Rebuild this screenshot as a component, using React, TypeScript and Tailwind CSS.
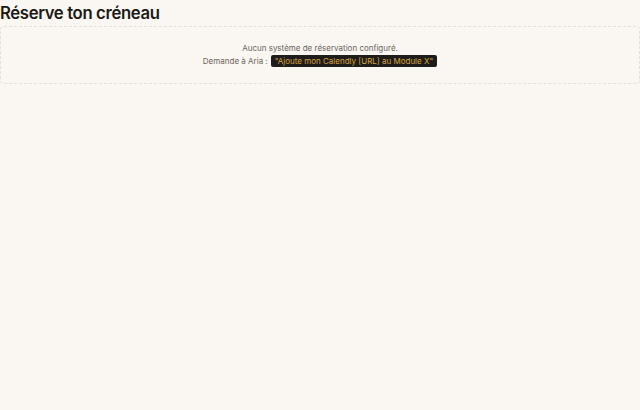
import React from "react";

export default function App() {
  return (
    <div
      className="min-h-[410px] w-full bg-[#faf6f1] text-[#1c1a17]"
      style={{ fontFamily: "Inter, 'Noto Sans', sans-serif" }}
    >
      <h1 className="pt-[1px] text-[16.7px] font-semibold leading-[25px] tracking-[-0.35px]">Réserve ton créneau</h1>
      <div className="flex h-[58px] flex-col items-center justify-center rounded-[4px] border border-dashed border-[#e8e0d3] pb-[1px]">
        <p className="text-[8px] leading-[13px] text-[#6b655d]">Aucun système de réservation configuré.</p>
        <p className="flex items-center gap-[3px] text-[8px] leading-[13px] text-[#6b655d]">
          <span>Demande à Aria :</span>
          <code className="rounded-[2px] bg-[#1e1d1b] px-[4px] leading-[12px] text-[#d9a441]" style={{ fontFamily: "Inter, sans-serif" }}>
            "Ajoute mon Calendly [URL] au Module X"
          </code>
        </p>
      </div>
    </div>
  );
}
